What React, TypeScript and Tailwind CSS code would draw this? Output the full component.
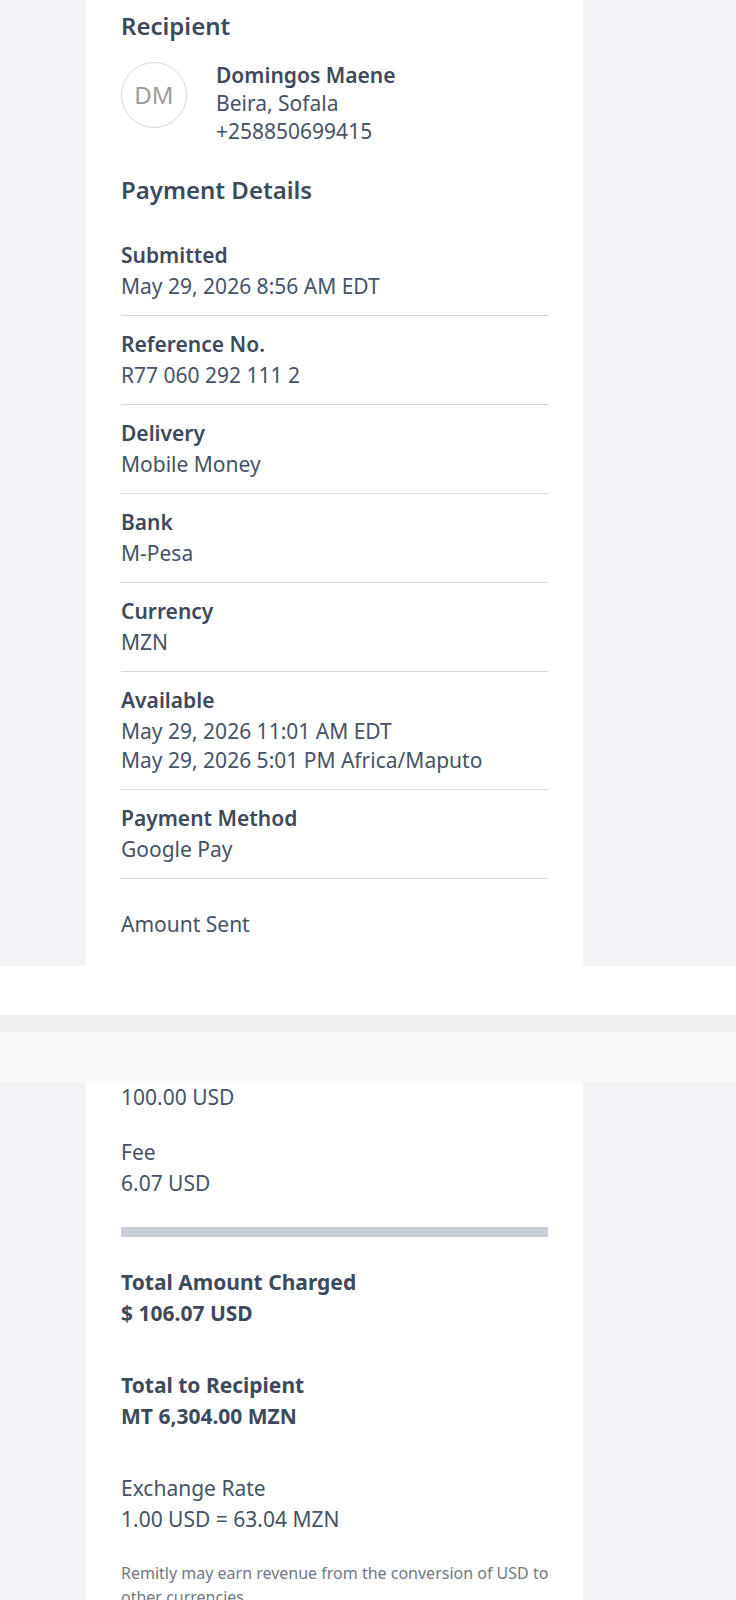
type Row = {
  label: string;
  values: string[];
};

const rows: Row[] = [
  { label: "Submitted", values: ["May 29, 2026 8:56 AM EDT"] },
  { label: "Reference No.", values: ["R77 060 292 111 2"] },
  { label: "Delivery", values: ["Mobile Money"] },
  { label: "Bank", values: ["M-Pesa"] },
  { label: "Currency", values: ["MZN"] },
  {
    label: "Available",
    values: ["May 29, 2026 11:01 AM EDT", "May 29, 2026 5:01 PM Africa/Maputo"],
  },
  { label: "Payment Method", values: ["Google Pay"] },
];

function DetailRow({ row }: { row: Row }) {
  return (
    <div className="pt-[13px] pb-[14px] border-b border-[#d3d8df]">
      <div className="text-[21px] leading-[30px] font-semibold text-[#3d4a5c]">{row.label}</div>
      <div className="mt-[2px]">
        {row.values.map((v) => (
          <div key={v} className="text-[21px] leading-[29px] text-[#465366]">
            {v}
          </div>
        ))}
      </div>
    </div>
  );
}

export default function App() {
  return (
    <div className="w-[736px] bg-[#f2f3f7]" style={{ fontFamily: '"Noto Sans", "Open Sans", sans-serif' }}>
      {/* top part of the receipt */}
      <div className="h-[966px] overflow-hidden">
        <div className="ml-[86px] w-[497px] h-full bg-white px-[35px] pt-[11px]">
          <h2 className="text-[24px] leading-[30px] font-semibold text-[#3d4a5c]">Recipient</h2>

          <div className="mt-[20px] flex items-start gap-[29px]">
            <div className="mt-[1px] w-[66px] h-[66px] shrink-0 rounded-full border border-[#d3d9e1] flex items-center justify-center text-[24px] text-[#9b9b9b]">
              DM
            </div>
            <div className="text-[21px] leading-[28px] text-[#465366]">
              <div className="font-semibold text-[#3d4a5c]">Domingos Maene</div>
              <div>Beira, Sofala</div>
              <div>+258850699415</div>
            </div>
          </div>

          <h2 className="mt-[30px] text-[24px] leading-[30px] font-semibold text-[#3d4a5c]">Payment Details</h2>

          <div className="mt-[22px]">
            {rows.map((r) => (
              <DetailRow key={r.label} row={r} />
            ))}
          </div>

          <div className="mt-[30px] text-[21px] leading-[30px] text-[#465366]">Amount Sent</div>
        </div>
      </div>

      {/* screenshot seam */}
      <div className="h-[49px] bg-white" />
      <div className="h-[17px] bg-[#efefef]" />
      <div className="h-[50px] bg-[#fafafa]" />

      {/* bottom part of the receipt */}
      <div className="h-[518px] overflow-hidden">
        <div className="ml-[86px] w-[497px] h-full bg-white px-[35px] pt-[1px]">
          <div className="text-[21px] leading-[29px] text-[#465366]">100.00 USD</div>

          <div className="mt-[25px] text-[21px] leading-[30px] text-[#465366]">Fee</div>
          <div className="mt-[2px] text-[21px] leading-[29px] text-[#465366]">6.07 USD</div>

          <div className="mt-[29px] h-[10px] bg-[#c7ced7]" />

          <div className="mt-[30px] text-[21px] leading-[30px] font-bold text-[#3d4a5c]">Total Amount Charged</div>
          <div className="mt-[2px] text-[21px] leading-[29px] font-bold text-[#3d4a5c]">$ 106.07 USD</div>

          <div className="mt-[42px] text-[21px] leading-[30px] font-bold text-[#3d4a5c]">Total to Recipient</div>
          <div className="mt-[2px] text-[21px] leading-[29px] font-bold text-[#3d4a5c]">MT 6,304.00 MZN</div>

          <div className="mt-[42px] text-[21px] leading-[30px] text-[#465366]">Exchange Rate</div>
          <div className="mt-[2px] text-[21px] leading-[29px] text-[#465366]">1.00 USD = 63.04 MZN</div>

          <p className="mt-[27px] mr-[-8px] text-[16px] leading-[24px] text-[#717985]">
            Remitly may earn revenue from the conversion of USD to other currencies.
          </p>
        </div>
      </div>
    </div>
  );
}
